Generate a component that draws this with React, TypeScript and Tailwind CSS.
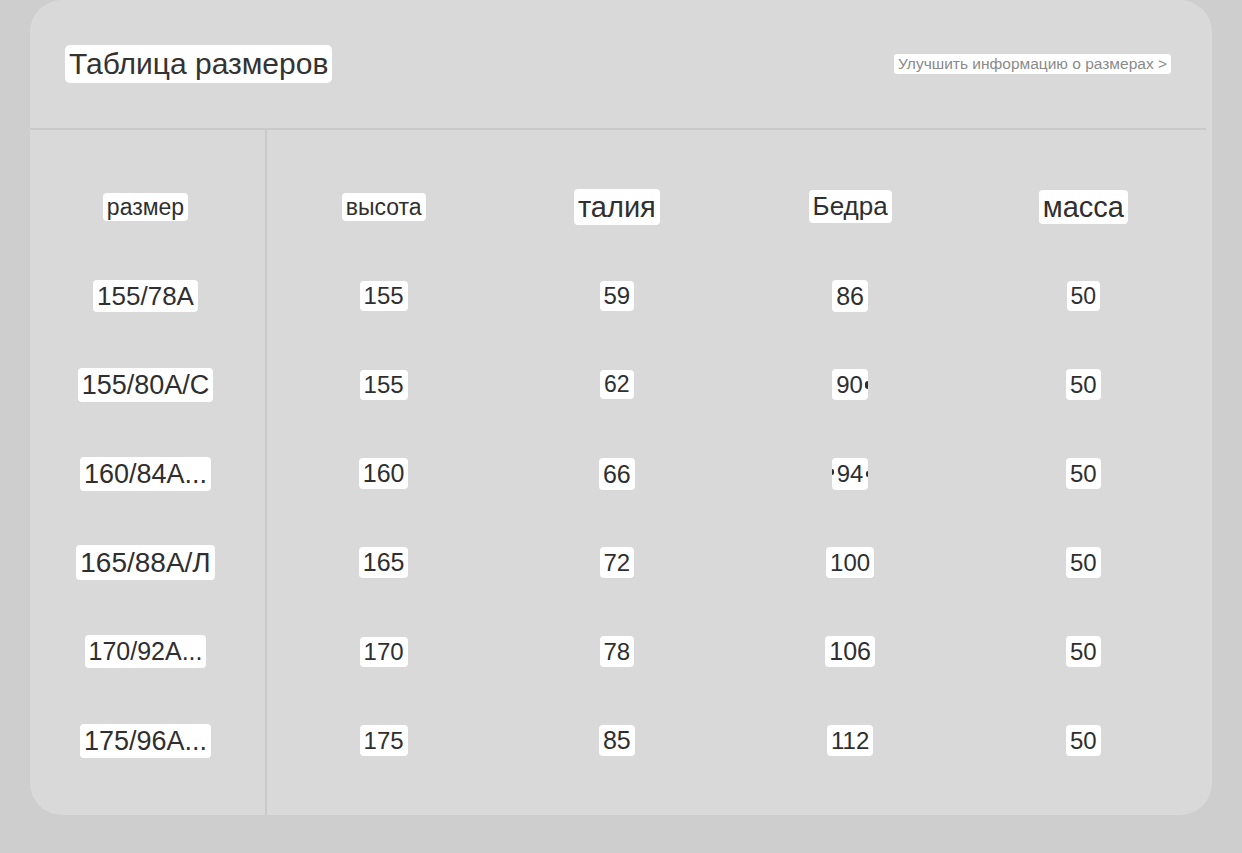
import React from "react";

type Cell = { t: string; fs: string; mark?: "right" | "both" };

const chip = "bg-white rounded-[4px] px-[4px] text-[#2f2f2f] whitespace-nowrap";

function Chip({ c }: { c: Cell }) {
  if (c.mark === "right") {
    return (
      <div className={`bg-white rounded-[4px] w-[36px] flex items-center pl-[4px] text-[#2f2f2f] ${c.fs} leading-[31px]`}>
        <span>{c.t}</span>
        <span className="ml-auto w-[3px] h-[8px] bg-[#2f2f2f] rounded-l-full" />
      </div>
    );
  }
  if (c.mark === "both") {
    return (
      <div className={`bg-white rounded-[4px] w-[36px] flex items-center justify-between text-[#2f2f2f] ${c.fs} leading-[32px]`}>
        <span className="w-[2px] h-[6px] bg-[#2f2f2f] rounded-r-full -mt-[4px]" />
        <span>{c.t}</span>
        <span className="w-[2px] h-[6px] bg-[#2f2f2f] rounded-l-full" />
      </div>
    );
  }
  return <div className={`${chip} ${c.fs}`}>{c.t}</div>;
}

const head: Cell[] = [
  { t: "размер", fs: "text-[23px] leading-[28px]" },
  { t: "высота", fs: "text-[23px] leading-[28px]" },
  { t: "талия", fs: "text-[29px] leading-[36px]" },
  { t: "Бедра", fs: "text-[26px] leading-[33px]" },
  { t: "масса", fs: "text-[29px] leading-[34px]" },
];

const rows: Cell[][] = [
  [
    { t: "155/78A", fs: "text-[26px] leading-[32px]" },
    { t: "155", fs: "text-[24px] leading-[30px]" },
    { t: "59", fs: "text-[24px] leading-[30px]" },
    { t: "86", fs: "text-[25px] leading-[32px]" },
    { t: "50", fs: "text-[23px] leading-[30px]" },
  ],
  [
    { t: "155/80A/C", fs: "text-[27px] leading-[34px]" },
    { t: "155", fs: "text-[24px] leading-[30px]" },
    { t: "62", fs: "text-[23px] leading-[29px]" },
    { t: "90", fs: "text-[24px]", mark: "right" },
    { t: "50", fs: "text-[24px] leading-[31px]" },
  ],
  [
    { t: "160/84A...", fs: "text-[27px] leading-[34px]" },
    { t: "160", fs: "text-[25px] leading-[31px]" },
    { t: "66", fs: "text-[25px] leading-[32px]" },
    { t: "94", fs: "text-[24px]", mark: "both" },
    { t: "50", fs: "text-[24px] leading-[31px]" },
  ],
  [
    { t: "165/88A/Л", fs: "text-[28px] leading-[35px]" },
    { t: "165", fs: "text-[25px] leading-[31px]" },
    { t: "72", fs: "text-[24px] leading-[31px]" },
    { t: "100", fs: "text-[24px] leading-[31px]" },
    { t: "50", fs: "text-[24px] leading-[31px]" },
  ],
  [
    { t: "170/92A...", fs: "text-[25px] leading-[33px]" },
    { t: "170", fs: "text-[24px] leading-[30px]" },
    { t: "78", fs: "text-[24px] leading-[31px]" },
    { t: "106", fs: "text-[25px] leading-[31px]" },
    { t: "50", fs: "text-[24px] leading-[31px]" },
  ],
  [
    { t: "175/96A...", fs: "text-[27px] leading-[34px]" },
    { t: "175", fs: "text-[24px] leading-[31px]" },
    { t: "85", fs: "text-[25px] leading-[31px]" },
    { t: "112", fs: "text-[24px] leading-[31px]" },
    { t: "50", fs: "text-[24px] leading-[31px]" },
  ],
];

export default function App() {
  const cols = [0, 1, 2, 3, 4];
  return (
    <div className="w-[1242px] h-[853px] bg-[#cecece] font-['Liberation_Sans',Arial,sans-serif] overflow-hidden">
      <div className="mx-[30px] h-[815px] bg-[#d9d9d9] rounded-[32px] flex flex-col overflow-hidden">
        <div className="h-[128px] flex items-center justify-between pl-[35px] pr-[41px] shrink-0">
          <div className="bg-white rounded-[5px] px-[4px] text-[30px] leading-[38px] text-[#333333]">
            Таблица размеров
          </div>
          <div className="bg-white rounded-[3px] px-[4px] text-[15.5px] leading-[20px] text-[#8a8a8a]">
            Улучшить информацию о размерах &gt;
          </div>
        </div>
        <div className="h-[2px] bg-[#cacaca] mr-[6px] shrink-0" />
        <div className="flex flex-1 mr-[12px]">
          {cols.map((ci) => (
            <div
              key={ci}
              className={
                ci === 0
                  ? "w-[237px] border-r-2 border-[#c9c9c9] pt-[32px] pr-[4px] flex flex-col"
                  : "flex-1 pt-[32px] flex flex-col"
              }
            >
              <div className="h-[89px] flex items-center justify-center">
                <Chip c={head[ci]} />
              </div>
              {rows.map((r, ri) => (
                <div key={ri} className="h-[89px] flex items-center justify-center">
                  <Chip c={r[ci]} />
                </div>
              ))}
            </div>
          ))}
        </div>
      </div>
    </div>
  );
}
